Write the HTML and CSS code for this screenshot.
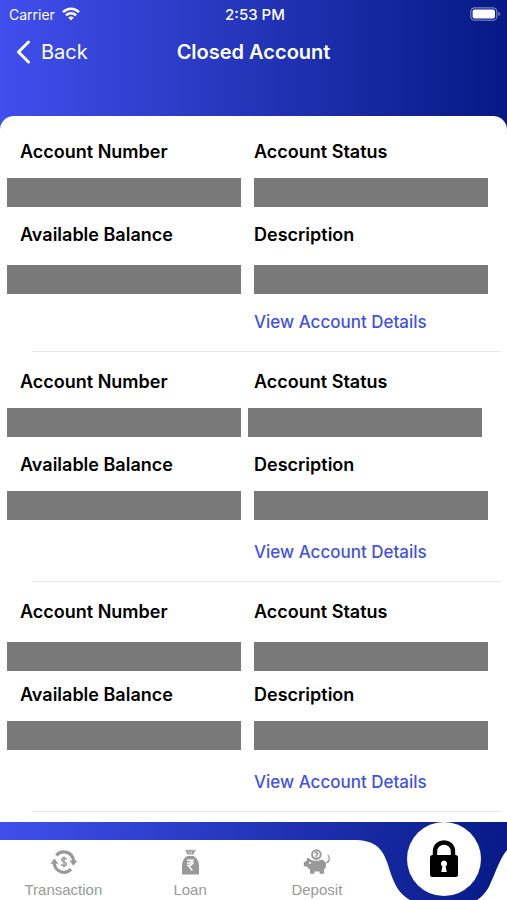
FILE: index.html
```html
<!DOCTYPE html>
<html lang="en">
<head>
    <meta charset="UTF-8">
    <meta name="viewport" content="width=device-width, initial-scale=1.0">
    <title>Closed Account</title>
    <link rel="stylesheet" href="styles.css">
</head>
<body>
    <div class="screen">
        <header class="header">
            <div class="status-bar">
                <div class="carrier">
                    <span>Carrier</span>
                    <svg width="18" height="14" viewBox="0 0 18 14" fill="none" stroke="#fff" stroke-width="2.6">
                        <path d="M1 5.2C5.5 0.6 12.5 0.6 17 5.2" />
                        <path d="M4 8.4C6.8 5.6 11.2 5.6 14 8.4" />
                        <path d="M9 13.6L6.2 10.6C7.8 9.2 10.2 9.2 11.8 10.6Z" fill="#fff" stroke="none" />
                    </svg>
                </div>
                <span class="time">2:53 PM</span>
                <div class="battery">
                    <svg width="31" height="14" viewBox="0 0 31 14">
                        <rect x="0.8" y="0.8" width="26" height="12.4" rx="3.8" fill="none" stroke="#fff" stroke-opacity="0.45" stroke-width="1.2" />
                        <rect x="2.6" y="2.6" width="22.4" height="8.8" rx="2" fill="#fff" />
                        <path d="M28.4 4.8C30.4 5.4 30.4 8.6 28.4 9.2Z" fill="#fff" fill-opacity="0.5" />
                    </svg>
                </div>
            </div>
            <div class="title-bar">
                <button type="button" class="back">
                    <svg width="16" height="24" viewBox="0 0 16 24" fill="none" stroke="#fff" stroke-width="3" stroke-linecap="round" stroke-linejoin="round">
                        <path d="M13.5 2L3.5 12L13.5 22" />
                    </svg>
                    Back
                </button>
                <h1>Closed Account</h1>
            </div>
        </header>

        <main class="card">
            <section class="account">
                <h2>Account Number</h2>
                <h2>Account Status</h2>
                <div class="value"></div>
                <div class="value"></div>
                <h2>Available Balance</h2>
                <h2>Description</h2>
                <div class="value value-low"></div>
                <div class="value value-low"></div>
                <a href="#">View Account Details</a>
            </section>

            <section class="account">
                <h2>Account Number</h2>
                <h2>Account Status</h2>
                <div class="value"></div>
                <div class="value value-left"></div>
                <h2>Available Balance</h2>
                <h2>Description</h2>
                <div class="value"></div>
                <div class="value"></div>
                <a href="#">View Account Details</a>
            </section>

            <section class="account">
                <h2>Account Number</h2>
                <h2>Account Status</h2>
                <div class="value value-low"></div>
                <div class="value value-low"></div>
                <h2>Available Balance</h2>
                <h2>Description</h2>
                <div class="value"></div>
                <div class="value"></div>
                <a href="#">View Account Details</a>
            </section>
        </main>

        <nav class="tabs">
            <div class="tabs-shape">
                <div class="tabs-fill"></div>
                <svg width="160" height="78" viewBox="0 0 160 78" fill="#fff">
                    <path d="M0 18H6C28 18 35 26 40 40C46 58 49 70 63 78H0Z" />
                    <path d="M160 28C152 38 149 50 144 60C141 68 136 74 130 78H160Z" />
                </svg>
            </div>
            <a href="#" class="tab">
                <svg width="28" height="28" viewBox="0 0 28 28">
                    <g fill="none" stroke="#999" stroke-width="3.2">
                        <path d="M7.3 7.4A9.8 9.8 0 0 1 24.6 13" />
                        <path d="M22.1 21.2A9.8 9.8 0 0 1 5.2 15" />
                    </g>
                    <path d="M1.4 15.8L5.4 10.6L9.4 15.8Z" fill="#999" />
                    <path d="M20.4 12.4H28.4L24.4 17.8Z" fill="#999" />
                    <path d="M17.4 11.6C16.8 9.4 12.6 9.6 12.6 11.8C12.6 14.4 17.4 13.4 17.4 16C17.4 18.4 12.8 18.4 12.4 16.2M15 8.4V19.4" fill="none" stroke="#999" stroke-width="1.4" />
                </svg>
                <span>Transaction</span>
            </a>
            <a href="#" class="tab">
                <svg width="28" height="28" viewBox="0 0 28 28" fill="#999">
                    <path d="M8.8 1.2L11.4 2.6L13 1.4L14.4 2.4L15.8 1.4L17.4 2.6L20 1.2L17.2 6.6H11.6Z" />
                    <path d="M12.8 3.2L13.6 5.4M16 3.2L15.2 5.4" stroke="#fff" stroke-width="0.8" />
                    <path d="M11.2 8H17.6C21 10 23 13.4 23 18V26.6H6V18C6 13.4 7.8 10 11.2 8Z" />
                    <path d="M11 12.2H17.8M11 15H17.8M12.4 12.2C17.8 12.2 17.8 17.6 12 17.6L16.4 22.6" fill="none" stroke="#fff" stroke-width="1.5" />
                </svg>
                <span>Loan</span>
            </a>
            <a href="#" class="tab">
                <svg width="28" height="28" viewBox="0 0 28 28" fill="#999">
                    <circle cx="13.4" cy="6.6" r="4.3" fill="none" stroke="#999" stroke-width="2" />
                    <path d="M12 5.2C13.4 3.6 15.2 4.8 14.4 6.4L13.4 7.4V9.6" fill="none" stroke="#999" stroke-width="1.6" />
                    <path d="M4.2 9.6L8.2 11.8C11 13.2 16 13.2 18.6 11.4C21.4 12.2 23 14.4 23 17C23 19.4 22 20.8 21 21.8V25.8H16.6V23.6H11.4V25.8H7V21.8C5.6 20.8 4.6 19.8 3.8 18.6H0.8V14L3.4 13.2Z" />
                    <circle cx="7" cy="15" r="1" fill="#fff" />
                    <path d="M22.4 14.8C26.6 14.6 27.6 9.6 24.8 6.8" fill="none" stroke="#999" stroke-width="1.2" />
                </svg>
                <span>Deposit</span>
            </a>
            <div class="lock-cell">
                <button type="button" class="lock" aria-label="Lock">
                    <svg width="30" height="38" viewBox="0 0 30 38">
                        <path d="M6 17V11.5C6 -0.5 24 -0.5 24 11.5V17" fill="none" stroke="#000" stroke-width="4.4" />
                        <rect x="1" y="15" width="28" height="22" rx="2.5" />
                        <path d="M15 20.5A3.2 3.2 0 0 1 16.6 26.4L17.8 32H12.2L13.4 26.4A3.2 3.2 0 0 1 15 20.5Z" fill="#fff" />
                    </svg>
                </button>
            </div>
        </nav>
    </div>
</body>
</html>
```
FILE: styles.css
```css
* {
    box-sizing: border-box;
}

body {
    margin: 0;
    font-family: Inter, "Liberation Sans", sans-serif;
}

.screen {
    display: flex;
    flex-direction: column;
    height: 100vh;
    background: linear-gradient(90deg, #404fed 0%, #2335b8 50%, #061985 100%);
}

.header {
    color: white;
    padding-bottom: 40px;
}

.status-bar {
    display: grid;
    grid-template-columns: 1fr auto 1fr;
    align-items: center;
    height: 28px;
    padding: 0 6px 0 9px;
    font-size: 14px;
}

.carrier {
    display: flex;
    align-items: center;
    gap: 7px;
}

.time {
    font-size: 15px;
    font-weight: 500;
}

.battery {
    display: flex;
    justify-content: flex-end;
}

.title-bar {
    display: grid;
    grid-template-columns: 1fr auto 1fr;
    align-items: center;
    height: 48px;
    padding: 0 15px;
}

.back {
    display: flex;
    align-items: center;
    gap: 10px;
    border: none;
    padding: 0;
    background: none;
    color: white;
    font-family: inherit;
    font-size: 20px;
    cursor: pointer;
}

h1 {
    margin: 0;
    font-size: 20px;
    font-weight: 600;
}

.card {
    flex: 1;
    min-height: 0;
    overflow: hidden;
    padding-top: 6px;
    background: white;
    border-radius: 14px 14px 0 0;
}

.account {
    display: grid;
    grid-template-columns: 1fr 1fr;
    grid-template-rows: 24px 59px 24px 63px 24px;
    column-gap: 13px;
    padding: 18px 19px 18px 7px;
    /* divider starts further in than the text */
    background: linear-gradient(#e8e8e8, #e8e8e8) 32px 100% / calc(100% - 38px) 1px no-repeat;
}

h2 {
    margin: 0;
    font-size: 18px;
    line-height: 24px;
    font-weight: 600;
    color: black;
}

.account h2:nth-of-type(odd) {
    padding-left: 13px;
}

.value {
    height: 29px;
    margin-top: 14px;
    background: #797979;
}

.value-low {
    margin-top: 18px;
}

.value-left {
    margin-left: -6px;
    margin-right: 6px;
}

.account a {
    grid-column: 2;
    font-size: 17px;
    line-height: 24px;
    font-weight: 500;
    color: #4353e0;
    text-decoration: none;
}

.tabs {
    position: relative;
    display: flex;
    height: 78px;
    background: linear-gradient(100deg, #404fed 0%, #2335b8 50%, #061985 100%);
}

.tabs-shape {
    position: absolute;
    inset: 0;
    display: flex;
}

.tabs-fill {
    flex: 1;
    margin-top: 18px;
    background: white;
}

.tab {
    position: relative;
    flex: 1;
    display: flex;
    flex-direction: column;
    align-items: center;
    gap: 4px;
    padding-top: 26px;
    font-family: "Liberation Sans", Arial, sans-serif;
    font-size: 15px;
    line-height: 20px;
    color: #999;
    text-decoration: none;
}

.lock-cell {
    position: relative;
    flex: 1;
    display: flex;
    justify-content: center;
}

.lock {
    display: flex;
    justify-content: center;
    align-items: center;
    width: 74px;
    height: 74px;
    border: none;
    border-radius: 50%;
    padding: 0;
    background: white;
    cursor: pointer;
}
```
